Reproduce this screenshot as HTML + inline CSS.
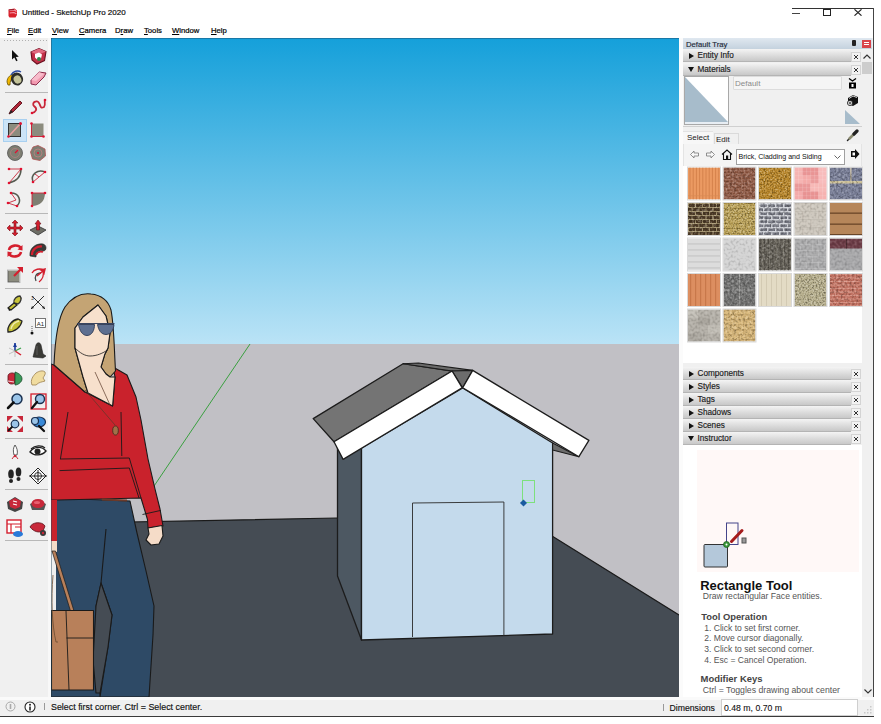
<!DOCTYPE html>
<html><head><meta charset="utf-8">
<style>
*{margin:0;padding:0;box-sizing:border-box}
html,body{width:881px;height:724px;overflow:hidden;background:#fff;font-family:"Liberation Sans",sans-serif;color:#000}
.a{position:absolute}
.t{position:absolute;white-space:nowrap;line-height:1}
#title{left:22px;top:9.4px;font-size:8px;color:#111;-webkit-text-stroke:0.2px #111}
.menu{top:27px;font-size:7.7px;color:#000;-webkit-text-stroke:0.2px #000}
.menu u{text-decoration:underline}
#toolbar{left:0;top:38px;width:50px;height:659px;background:#f0f0f0}
#vp{left:51px;top:38px;width:628px;height:659px;overflow:hidden}
#tray{left:679px;top:38px;width:194px;height:659px;background:#f0f0f0}
.hdr{position:absolute;left:4px;width:168px;height:13px;background:linear-gradient(#f4f4f4,#d9d9d9 60%,#c8c8c8);border-bottom:1px solid #b4b4b4}
.hdr span{position:absolute;left:14.5px;top:2.5px;font-size:8.2px;color:#1a1a1a;line-height:1;-webkit-text-stroke:0.15px #1a1a1a}
.hdr i{position:absolute;left:6px;top:3.5px;width:0;height:0;border-top:3.5px solid transparent;border-bottom:3.5px solid transparent;border-left:5px solid #111}
.hdr i.d{left:5px;top:4px;border-left:3.5px solid transparent;border-right:3.5px solid transparent;border-top:5px solid #111;border-bottom:0}
.cls{position:absolute;left:172px;width:10px;height:10px;border:1px solid #d4d4d4;background:#f2f2f2}.cls:after{content:"";position:absolute;left:2px;top:2px;width:4px;height:4px;background:linear-gradient(45deg,transparent 42%,#333 42% 58%,transparent 58%),linear-gradient(-45deg,transparent 42%,#333 42% 58%,transparent 58%)}
#status{left:0;top:697px;width:874px;height:20px;background:#f0f0f0;border-bottom:1px solid #3a3a3a}
</style></head><body>
<!-- title bar -->
<svg class="a" style="left:8px;top:7.5px" width="10" height="10" viewBox="0 0 10 10"><path d="M0.5 1.5 L6.5 0.5 L9 2.5 L9 7 L7.5 9.5 L1.5 9.5 L0.5 8Z" fill="#d8202a"/><path d="M1.5 2.5 L6.5 2 L8.5 3.5 M1.8 5 L6 4.5 L8.5 6" stroke="#f49aa8" stroke-width="1.1" fill="none"/><path d="M0.8 2 L6 1.5" stroke="#7a1020" stroke-width="0.8"/></svg>
<div class="t" id="title">Untitled - SketchUp Pro 2020</div>
<div class="a" style="left:792px;top:8px;width:82px;height:1px;background:#333"></div>
<div class="a" style="left:873px;top:8px;width:1px;height:709px;background:#444"></div>
<div class="a" style="left:792px;top:12.5px;width:8px;height:1px;background:#444"></div>
<div class="a" style="left:823px;top:9px;width:7.5px;height:7px;border:1px solid #222"></div>
<svg class="a" style="left:854px;top:9px" width="8" height="7"><path d="M0.5 0.3L7.5 6.7M7.5 0.3L0.5 6.7" stroke="#222" stroke-width="1.1"/></svg>
<!-- menu -->
<div class="t menu" style="left:7px"><u>F</u>ile</div>
<div class="t menu" style="left:28px"><u>E</u>dit</div>
<div class="t menu" style="left:52px"><u>V</u>iew</div>
<div class="t menu" style="left:79px"><u>C</u>amera</div>
<div class="t menu" style="left:115px">D<u>r</u>aw</div>
<div class="t menu" style="left:144px"><u>T</u>ools</div>
<div class="t menu" style="left:172px"><u>W</u>indow</div>
<div class="t menu" style="left:211px"><u>H</u>elp</div>

<div class="a" id="toolbar"></div>
<div class="a" style="left:48px;top:38px;width:3px;height:659px;background:#f8f8f8"></div>
<div class="a" style="left:4px;top:40px;width:44px;height:1px;background:repeating-linear-gradient(90deg,#b0b0b0 0 1px,transparent 1px 3px)"></div>
<div class="a" style="left:3px;top:119px;width:24px;height:23px;background:#cce4f7;border:1px solid #a8d0f0"></div>
<div class="a" style="left:5px;top:92px;width:43px;height:1px;background:#b8b8b8"></div>
<div class="a" style="left:5px;top:213px;width:43px;height:1px;background:#b8b8b8"></div>
<div class="a" style="left:5px;top:288px;width:43px;height:1px;background:#b8b8b8"></div>
<div class="a" style="left:5px;top:364px;width:43px;height:1px;background:#b8b8b8"></div>
<div class="a" style="left:5px;top:438px;width:43px;height:1px;background:#b8b8b8"></div>
<div class="a" style="left:5px;top:489px;width:43px;height:1px;background:#b8b8b8"></div>
<div class="a" style="left:5px;top:540px;width:43px;height:1px;background:#b8b8b8"></div>
<svg class="a" style="left:5px;top:46px" width="20" height="20" viewBox="0 0 20 20"><path d="M7 4 L7 13.5 L9.3 11.6 L11.2 15.2 L12.6 14.5 L10.8 10.9 L13.8 10.7 Z" fill="#111"/></svg>
<svg class="a" style="left:28px;top:46px" width="20" height="20" viewBox="0 0 20 20"><path d="M3 6 L11 2.5 L18 5.5 L16.5 14.5 L9 18 L4 14 Z" fill="#c23048" stroke="#6a1020" stroke-width="1.1"/><path d="M3 6 L11 2.5 L18 5.5 L10 9Z" fill="#e06a80"/><path d="M7 8 L11 6.5 L14 8.5 L13 12.5 L9 13.5 L7 11.5Z" fill="#fff"/><circle cx="11" cy="13" r="2" fill="#2f8a4a"/></svg>
<svg class="a" style="left:5px;top:68px" width="20" height="20" viewBox="0 0 20 20"><path d="M2 14 C2 9 6 6 10 6 L8 10 C6 11 5 13 5 17 L3 17Z" fill="#f2b800" stroke="#6a5200" stroke-width="0.8"/><ellipse cx="12" cy="11" rx="6" ry="6.5" transform="rotate(-25 12 11)" fill="#2e2e2a"/><ellipse cx="12.5" cy="11.5" rx="3.8" ry="4.2" transform="rotate(-25 12.5 11.5)" fill="#c4c49a"/><path d="M6 7 C8 3 13 2 16 4" stroke="#2a4aa0" stroke-width="1.3" fill="none"/></svg>
<svg class="a" style="left:28px;top:68px" width="20" height="20" viewBox="0 0 20 20"><path d="M3 12 L11 4 L18 5 L16 9 L8 17 L3 16Z" fill="#f29ab0" stroke="#8a2a4a" stroke-width="1"/><path d="M3 12 L11 4 L16 6 L8 13Z" fill="#f7bccb"/></svg>
<svg class="a" style="left:5px;top:97px" width="20" height="20" viewBox="0 0 20 20"><path d="M4 17 L6 13 L15 4 L17 6 L8 15 Z" fill="#b0283a" stroke="#5a1018" stroke-width="0.9"/><path d="M4 17 L6 13 L8 15Z" fill="#222"/></svg>
<svg class="a" style="left:28px;top:97px" width="20" height="20" viewBox="0 0 20 20"><path d="M4 16 C8 15 10 12 6 9 C3 6 9 2 11 6 C13 9 12 12 16 10 C18 8 16 4 17 3" stroke="#c8283a" stroke-width="1.8" fill="none"/><circle cx="4" cy="16" r="1.3" fill="#e01030"/><circle cx="17" cy="3" r="1.3" fill="#e01030"/></svg>
<svg class="a" style="left:5px;top:120px" width="20" height="20" viewBox="0 0 20 20"><rect x="3.5" y="3.5" width="12" height="13" fill="#8c8c7e" stroke="#333" stroke-width="1"/><path d="M4 16 L15 4" stroke="#e8a0a0" stroke-width="1.5"/><circle cx="15.5" cy="3.5" r="1.5" fill="#e01030"/><circle cx="3.5" cy="16.5" r="1.3" fill="#e01030"/></svg>
<svg class="a" style="left:28px;top:120px" width="20" height="20" viewBox="0 0 20 20"><rect x="3.5" y="3.5" width="12" height="13" fill="#8c8c7e"/><path d="M3.5 3.5 V16.5 H15.5" stroke="#c8283a" stroke-width="1" fill="none"/><circle cx="3.5" cy="3.5" r="1.3" fill="#e01030"/><circle cx="3.5" cy="16.5" r="1.3" fill="#e01030"/><circle cx="15.5" cy="16.5" r="1.3" fill="#e01030"/></svg>
<svg class="a" style="left:5px;top:143px" width="20" height="20" viewBox="0 0 20 20"><circle cx="10" cy="10" r="7.5" fill="#7e7e72" stroke="#555" stroke-width="0.8"/><circle cx="10" cy="10" r="4.5" fill="none" stroke="#b08080" stroke-width="0.8"/><path d="M10 10 L13 7" stroke="#e01030" stroke-width="1.2"/></svg>
<svg class="a" style="left:28px;top:143px" width="20" height="20" viewBox="0 0 20 20"><path d="M10 2.5 L17 6 L17.5 13 L12 17.5 L4.5 16 L2.5 9 L5 4Z" fill="#7e7e72" stroke="#b05050" stroke-width="0.8"/><circle cx="10" cy="10" r="4" fill="none" stroke="#c08080" stroke-width="0.8"/><circle cx="10" cy="10" r="1" fill="#e01030"/></svg>
<svg class="a" style="left:5px;top:166px" width="20" height="20" viewBox="0 0 20 20"><path d="M4 17 C12 15 16 10 16 3" stroke="#555a50" stroke-width="1.5" fill="none"/><path d="M4 17 L16 3 M4 3 L16 3" stroke="#c8283a" stroke-width="0.9"/><circle cx="4" cy="3" r="1.3" fill="#e01030"/><circle cx="16" cy="3" r="1.3" fill="#e01030"/><circle cx="4" cy="17" r="1.3" fill="#e01030"/></svg>
<svg class="a" style="left:28px;top:166px" width="20" height="20" viewBox="0 0 20 20"><path d="M5 16 C2 8 10 3 17 6" stroke="#555a50" stroke-width="1.5" fill="none"/><path d="M5 16 L17 6 M7 8 L11 11" stroke="#c8283a" stroke-width="0.9"/><circle cx="5" cy="16" r="1.3" fill="#e01030"/><circle cx="17" cy="6" r="1.3" fill="#e01030"/></svg>
<svg class="a" style="left:5px;top:189px" width="20" height="20" viewBox="0 0 20 20"><path d="M6 4 C14 4 17 12 12 17" stroke="#555a50" stroke-width="1.5" fill="none"/><path d="M6 4 L11 11 L3 14 L12 17" stroke="#c8283a" stroke-width="0.9" fill="none"/><circle cx="6" cy="4" r="1.3" fill="#e01030"/><circle cx="3" cy="14" r="1.3" fill="#e01030"/><circle cx="12" cy="17" r="1.3" fill="#e01030"/></svg>
<svg class="a" style="left:28px;top:189px" width="20" height="20" viewBox="0 0 20 20"><path d="M4 17 L4 4 L17 4 C17 12 12 17 4 17Z" fill="#7e7e72"/><path d="M4 4 L17 4 M4 4 L4 17" stroke="#c8283a" stroke-width="0.9"/><circle cx="4" cy="4" r="1.3" fill="#e01030"/><circle cx="17" cy="4" r="1.3" fill="#e01030"/><circle cx="4" cy="17" r="1.3" fill="#e01030"/></svg>
<svg class="a" style="left:5px;top:218px" width="20" height="20" viewBox="0 0 20 20"><path d="M10 2 L13 5 L11 5 L11 9 L15 9 L15 7 L18 10 L15 13 L15 11 L11 11 L11 15 L13 15 L10 18 L7 15 L9 15 L9 11 L5 11 L5 13 L2 10 L5 7 L5 9 L9 9 L9 5 L7 5Z" fill="#d41f2e" stroke="#7a1018" stroke-width="0.6"/></svg>
<svg class="a" style="left:28px;top:218px" width="20" height="20" viewBox="0 0 20 20"><path d="M2 12 L10 8 L18 12 L10 17Z" fill="#6e6e66" stroke="#333" stroke-width="0.8"/><path d="M10 2 L13 6 L11.5 6 L11.5 12 L8.5 12 L8.5 6 L7 6Z" fill="#d41f2e" stroke="#6a1018" stroke-width="0.6"/></svg>
<svg class="a" style="left:5px;top:241px" width="20" height="20" viewBox="0 0 20 20"><path d="M4 9 C5 4 13 3 16 7" stroke="#d41f2e" stroke-width="2.6" fill="none"/><path d="M16 11 C15 16 7 17 4 13" stroke="#d41f2e" stroke-width="2.6" fill="none"/><path d="M17.5 4 L17.5 9.5 L12.5 8.5Z" fill="#d41f2e"/><path d="M2.5 16 L2.5 10.5 L7.5 11.5Z" fill="#d41f2e"/></svg>
<svg class="a" style="left:28px;top:241px" width="20" height="20" viewBox="0 0 20 20"><path d="M2 15 C1 7 8 2 15 3 C19 4 19 10 15 10 C11 9 8 12 8 16 Z" fill="#3a3a38" stroke="#222" stroke-width="0.6"/><path d="M4 14 C4 8 9 5 14 5.5" stroke="#d41f2e" stroke-width="2.2" fill="none"/><path d="M8 14 C9 11 12 10 15 11" stroke="#d41f2e" stroke-width="1.8" fill="none"/></svg>
<svg class="a" style="left:5px;top:265px" width="20" height="20" viewBox="0 0 20 20"><rect x="3" y="5" width="12" height="12" fill="#8c8c7e" stroke="#555" stroke-width="0.8"/><path d="M3 5 H15 V17" stroke="#fff" stroke-width="1" fill="none"/><path d="M9 11 L16 4" stroke="#d41f2e" stroke-width="2.2"/><path d="M12 2 L18 2 L18 8Z" fill="#d41f2e"/></svg>
<svg class="a" style="left:28px;top:265px" width="20" height="20" viewBox="0 0 20 20"><path d="M4 8 C6 4 12 3 16 5" stroke="#d41f2e" stroke-width="1.3" fill="none"/><path d="M8 16 C6 12 8 8 13 8" stroke="#444" stroke-width="1.3" fill="none"/><path d="M11 17 C15 14 16 10 15 6" stroke="#d41f2e" stroke-width="1.3" fill="none"/><path d="M9 11 L15 6 L13 5 L17 4 L16 8 L15 6" fill="#d41f2e" stroke="#d41f2e" stroke-width="1.5"/></svg>
<svg class="a" style="left:5px;top:293px" width="20" height="20" viewBox="0 0 20 20"><path d="M9 10 C8 6 12 3 15 3 C17 5 16 9 13 11Z" fill="#c8c43a" stroke="#333" stroke-width="1.3"/><path d="M3 15 L9 10 L12 12 L6 17Z" fill="#c8c43a" stroke="#222" stroke-width="1.2"/><path d="M3 15 L6 17 L4 18Z" fill="#111"/></svg>
<svg class="a" style="left:28px;top:293px" width="20" height="20" viewBox="0 0 20 20"><path d="M4 3 L17 16 M16 3 L3 16" stroke="#333" stroke-width="1"/><path d="M3 16 L6 15 L4 13Z M17 16 L14 15 L16 13Z" fill="#222"/><text x="3" y="7" font-size="5" fill="#333" font-family="Liberation Sans">3</text></svg>
<svg class="a" style="left:5px;top:316px" width="20" height="20" viewBox="0 0 20 20"><path d="M3 16 C2 10 7 4 13 3 L17 5 C16 11 10 16 3 16Z" fill="#c4c03a" stroke="#222" stroke-width="1.3"/><path d="M6 13 C7 9 10 6 14 5" stroke="#f0ecb0" stroke-width="1.4" fill="none"/></svg>
<svg class="a" style="left:28px;top:316px" width="20" height="20" viewBox="0 0 20 20"><rect x="7.5" y="2.5" width="10" height="9" fill="#fff" stroke="#555" stroke-width="0.8"/><text x="8.7" y="9.5" font-size="6" fill="#222" font-family="Liberation Sans">A1</text><path d="M4 10 V16" stroke="#333" stroke-width="0.8" stroke-dasharray="1 1"/><circle cx="4" cy="17" r="1.5" fill="#111"/></svg>
<svg class="a" style="left:5px;top:340px" width="20" height="20" viewBox="0 0 20 20"><path d="M10 11 L10 3" stroke="#1a3a9a" stroke-width="1.6"/><path d="M10 3 L8 7 L12 7Z" fill="#1a3a9a"/><path d="M10 11 L16 8" stroke="#3aa04a" stroke-width="1.3"/><path d="M10 11 L16 15" stroke="#d41f2e" stroke-width="1.5"/><path d="M10 11 L4 14 M10 11 L10 17 M10 11 L4 8" stroke="#aaa" stroke-width="0.7"/></svg>
<svg class="a" style="left:28px;top:340px" width="20" height="20" viewBox="0 0 20 20"><path d="M5 17 L8 5 C9 2 12 2 13 5 L15 14 L18 16 L15 18Z" fill="#3a3a36" stroke="#222" stroke-width="0.6"/><path d="M9 6 L9 15" stroke="#666" stroke-width="0.8"/></svg>
<svg class="a" style="left:5px;top:368px" width="20" height="20" viewBox="0 0 20 20"><path d="M3 8 C3 5 8 4 10 6 L10 15 C7 17 3 16 3 13Z" fill="#c8283a" stroke="#5a1018" stroke-width="0.8"/><path d="M10 4 L10 17 C13 17 17 14 17 11 C17 7 13 5 10 4Z" fill="#3a9a5a" stroke="#1a4a2a" stroke-width="0.8"/><path d="M3 13 L9 14" stroke="#fff" stroke-width="0.8"/></svg>
<svg class="a" style="left:28px;top:368px" width="20" height="20" viewBox="0 0 20 20"><path d="M4 17 C2 12 5 8 8 5 C11 3 15 2 17 4 C18 6 16 8 15 10 L17 13 C14 14 11 14 8 17Z" fill="#f0dca0" stroke="#9a8050" stroke-width="0.8"/></svg>
<svg class="a" style="left:5px;top:391px" width="20" height="20" viewBox="0 0 20 20"><circle cx="12" cy="8" r="5" fill="#9ac4e8" stroke="#1a3050" stroke-width="1.5"/><path d="M8.5 11.5 L3 17" stroke="#111" stroke-width="2.5" stroke-linecap="round"/></svg>
<svg class="a" style="left:28px;top:391px" width="20" height="20" viewBox="0 0 20 20"><rect x="3" y="3" width="15" height="15" fill="none" stroke="#d41f2e" stroke-width="1.3"/><circle cx="12" cy="8" r="4.5" fill="#9ac4e8" stroke="#1a3050" stroke-width="1.4"/><path d="M9 11 L4 17" stroke="#111" stroke-width="2.3" stroke-linecap="round"/></svg>
<svg class="a" style="left:5px;top:414px" width="20" height="20" viewBox="0 0 20 20"><path d="M2 2 L8 2 L2 8Z M18 2 L12 2 L18 8Z M2 18 L8 18 L2 12Z M18 18 L12 18 L18 12Z" fill="#c8283a"/><circle cx="10" cy="10" r="3.8" fill="#9ac4e8" stroke="#1a3050" stroke-width="1.2"/><path d="M7.5 12.5 L3 17" stroke="#111" stroke-width="1.8"/></svg>
<svg class="a" style="left:28px;top:414px" width="20" height="20" viewBox="0 0 20 20"><ellipse cx="11" cy="8" rx="6.5" ry="5" fill="#3a8ad8" stroke="#1a3050" stroke-width="1.2"/><circle cx="7" cy="7" r="3.5" fill="#9ac4e8" stroke="#1a3050" stroke-width="1.2"/><path d="M11 12 L16 17" stroke="#111" stroke-width="2.3" stroke-linecap="round"/></svg>
<svg class="a" style="left:5px;top:442px" width="20" height="20" viewBox="0 0 20 20"><path d="M10 3 C12 6 13 9 12 13 L9 13 C8 9 8 6 10 3Z" fill="#fff" stroke="#333" stroke-width="0.8"/><path d="M7 17 L10 13 L13 17" stroke="#c8283a" stroke-width="1" fill="none"/><circle cx="10" cy="14" r="1.2" fill="#c8283a"/></svg>
<svg class="a" style="left:28px;top:442px" width="20" height="20" viewBox="0 0 20 20"><path d="M2 10 C6 4 14 4 18 9 C14 14 6 14 2 10Z" fill="#fff" stroke="#222" stroke-width="1.4"/><circle cx="9.5" cy="9.5" r="3" fill="#222"/><path d="M3 7 C7 3 14 3 17 6" stroke="#222" stroke-width="1.2" fill="none"/></svg>
<svg class="a" style="left:5px;top:466px" width="20" height="20" viewBox="0 0 20 20"><ellipse cx="6" cy="8" rx="2.8" ry="4.5" fill="#222"/><ellipse cx="6" cy="15" rx="2" ry="2" fill="#222"/><ellipse cx="13.5" cy="6" rx="2.8" ry="4.5" fill="#222"/><ellipse cx="13.5" cy="13" rx="2" ry="2" fill="#222"/></svg>
<svg class="a" style="left:28px;top:466px" width="20" height="20" viewBox="0 0 20 20"><path d="M10 2 L18 10 L10 18 L2 10Z" fill="#fff" stroke="#222" stroke-width="1"/><path d="M1 10 H19 M10 4 V16" stroke="#222" stroke-width="1"/><circle cx="10" cy="10" r="3.5" fill="none" stroke="#222" stroke-width="0.9"/></svg>
<svg class="a" style="left:5px;top:494px" width="20" height="20" viewBox="0 0 20 20"><path d="M2 8 L10 3 L18 8 L17 15 L10 18 L3 15Z" fill="#444" /><path d="M4 7 L10 4 L16 7 L15 13 L10 15 L5 13Z" fill="#c8283a"/><path d="M8 7 L12 8 M8 10 L12 11" stroke="#fff" stroke-width="1.1"/></svg>
<svg class="a" style="left:28px;top:494px" width="20" height="20" viewBox="0 0 20 20"><path d="M2 10 L10 6 L18 10 L16 16 L4 16Z" fill="#555" /><ellipse cx="10" cy="9.5" rx="6.5" ry="4.5" fill="#c8283a"/><ellipse cx="9" cy="8.5" rx="3" ry="1.5" fill="#e86070"/></svg>
<svg class="a" style="left:5px;top:518px" width="20" height="20" viewBox="0 0 20 20"><rect x="2" y="2" width="14" height="13" fill="#fff" stroke="#d41f2e" stroke-width="1.4"/><path d="M2 6 H16 M6 6 V15 M10 9 H16" stroke="#d41f2e" stroke-width="1.2"/><ellipse cx="13" cy="16" rx="5" ry="3" fill="#2a7ad8"/></svg>
<svg class="a" style="left:28px;top:518px" width="20" height="20" viewBox="0 0 20 20"><path d="M2 9 C4 4 14 3 17 8 L15 13 C11 15 6 14 2 9Z" fill="#c8283a" stroke="#5a1018" stroke-width="0.8"/><circle cx="15" cy="15" r="3" fill="#3a3a3a"/><circle cx="15" cy="15" r="1.2" fill="#c8283a"/></svg>
<div class="a" id="vp">
<svg width="628" height="659" viewBox="51 38 628 659" style="position:absolute;left:0;top:0">
<defs><linearGradient id="sky" x1="0" y1="0" x2="0" y2="1"><stop offset="0" stop-color="#15a0da"/><stop offset="1" stop-color="#bae3f6"/></linearGradient></defs>
<rect x="51" y="38" width="628" height="306" fill="url(#sky)"/>
<rect x="51" y="344" width="628" height="353" fill="#c1c0c5"/>
<polygon points="51,523.5 337,518 552,536 679,615 679,697 51,697" fill="#454c54"/>
<path d="M51,523.5 L337,518 M552,536 L679,615" stroke="#1a1a1a" stroke-width="1.2" fill="none"/>
<line x1="250" y1="344" x2="150" y2="492" stroke="#3aa040" stroke-width="1"/>
<!-- figure -->
<g stroke="#1a1a1a" stroke-width="1.1" stroke-linejoin="round">
<path d="M51,498 L51,697 L100,697 L99,646 L96,606 L101,583 L112,615 L108,647 L100,697 L149,697 L153,635 L154,606 L146,571 L137,533 L130,501 L51,498Z" fill="#2e4a66"/>
<path d="M96,606 L101,583 L112,615 L108,647 L100,693 L96,693 L93,660 Z" fill="#454c54"/>
<path d="M106,529 L101,583" fill="none"/>
<path d="M51,364 L54,365 L85,392 L112.6,406 L115,377 L113,367 L127,375 L136,397 L141,420 L148,459 L155,489 L160,509 L163,526 L148,528 L147.5,519.5 L141,498 L100,499 L58,500 L51,500 Z" fill="#c9222c"/>
<path d="M60,459 L129.3,458 M59.6,470.6 L129.3,468 M68,412 L60.4,459 M121,412 L121.8,456 M129.3,458 L141,498 M129.3,468 L139,498 M142.5,514.5 L160.8,510.4" fill="none" stroke-width="0.9"/>
<path d="M102,499.5 L127,500.5" stroke="#6b3a2a" stroke-width="2.2"/>
<path d="M54,365 C55,340 58,318 65,307 C73,296 83,293 91,294 C101,295 108,300 111,310 C114,325 114,345 115.5,371 L110,377 L106,374 L101,367 L104.7,354.6 L108,348 L110,333 L106,316 L98,305 L83,317 L75,328 L75,348 L83,377 L88,393 L85,392 Z" fill="#c4a474"/>
<path d="M98,305 L106,316 L110,333 L108,348 L104.7,354.6 L101,367 L106,374 L110,377 L115,377 L112.6,406 L88,393 L83,377 L75,348 L75,328 L83,317 Z" fill="#f7e0cc"/>
<path d="M75,348 C80,353 85,356 90,356 C97,356 103,353 107.6,350" fill="none" stroke-width="0.8"/>
<path d="M77,323.5 L114.5,323.5" stroke="#3a4560" stroke-width="1.2"/><path d="M78.5,324.5 L94.5,324.5 C94.5,330 92,335.5 87,335.5 C82,335.5 79.5,330 78.5,324.5Z" fill="#5e6f90" stroke="#2e3a55" stroke-width="0.9"/><path d="M97.5,324.5 L114,324.5 C113.5,330 111,334.5 106,334.5 C101,334.5 98.5,330 97.5,324.5Z" fill="#5e6f90" stroke="#2e3a55" stroke-width="0.9"/>
<path d="M85,390 L115,425 M95,372 L110,405" fill="none" stroke="#5a3a2a" stroke-width="0.7"/>
<ellipse cx="115.5" cy="430.5" rx="2.8" ry="4.5" fill="#a07048" stroke="#3a2a1a" stroke-width="0.8"/>
<path d="M148,528 L162,525.5 L163,536 L159,544 L151,545 L146,540 L149,534 Z" fill="#f5dcc8"/>
<path d="M51,500 L57,500 L57,545 L51,545Z" fill="#c9222c" stroke="none"/>
<path d="M51,545 L56,545 L56,610 L51,610Z" fill="#eeeeee" stroke="none"/>
<path d="M51,541 L57,541 L57,552 L51,552Z" fill="#f5dcc8" stroke="none"/>
<path d="M52,551 L55.5,551 L74,611 L70.5,611Z" fill="#b8805a" stroke-width="0.7"/>
<path d="M51.5,610.5 L93.5,610.5 L93.5,690 L51.5,690Z" fill="#b8805a"/>
<path d="M66,611 L69,690 M66.5,638 L93.5,638" fill="none" stroke-width="0.9"/>
<path d="M53,575 C51,600 52,625 56,642 L58,642" fill="none" stroke="#6a4a30" stroke-width="0.8"/>
</g>
<!-- house -->
<g stroke="#1c1c1c" stroke-linejoin="round">
<polygon points="337.5,446 361.5,446 361.5,640 337.5,576" fill="#4d5862" stroke-width="1.3"/>
<polygon points="361.5,448 462.7,388 552.6,443 552.6,634 361.5,640" fill="#c4daec" stroke-width="1.3"/>
<polyline points="412.5,637 412.5,503 503.9,502 503.9,636" fill="none" stroke="#2a2a2a" stroke-width="0.9"/>
<polygon points="313.2,418.6 403.1,363.7 452.1,371 334,441.8" fill="#747474" stroke-width="1.3"/>
<polygon points="403.1,363.7 418.5,363 472.7,370.4 452.1,371" fill="#6a6a6a" stroke-width="1.1"/>
<polygon points="452.1,371 472.7,370.4 462.7,387.7" fill="#6c6c6c" stroke-width="1.1"/>
<polygon points="552.6,443 578.9,456.7 552.6,450" fill="#6c6c6c" stroke-width="1.1"/>
<polygon points="334,441.8 452.1,371 462.1,387.7 343.1,459.4" fill="#fff" stroke-width="1.3"/>
<polygon points="472.7,370.4 588.9,440.4 578.9,456.7 462.7,387.7" fill="#fff" stroke-width="1.3"/>
</g>
<rect x="522.5" y="480.5" width="12" height="22" fill="none" stroke="#7de07d" stroke-width="1"/>
<rect x="521" y="500.5" width="5" height="5" fill="#1a5aa0" transform="rotate(45 523.5 503)"/>
</svg>
<div class="a" style="left:0;top:0;width:1px;height:659px;background:rgba(40,70,90,.45)"></div>
<div class="a" style="left:0;top:0;width:628px;height:1px;background:rgba(30,60,90,.4)"></div>
</div>
<div class="a" id="tray">
<div class="a" style="left:0;top:0;width:4px;height:659px;background:#fbfbfb"></div>
<div class="a" style="left:4px;top:0;width:189px;height:10.5px;background:linear-gradient(#e0e8f0,#c4d2de)"></div>
<div class="t" style="left:7px;top:2.5px;font-size:7.7px;color:#1e2a38;-webkit-text-stroke:0.15px #1e2a38">Default Tray</div>
<div class="a" style="left:172.5px;top:2px;width:4px;height:6px;background:#222;border-radius:1px"></div>
<div class="a" style="left:183px;top:2px;width:9px;height:8px;background:#d9434b"></div>
<div class="a" style="left:185px;top:4px;width:5px;height:1px;background:#fff"></div><div class="a" style="left:185px;top:6px;width:5px;height:1px;background:#fff"></div>
<div class="hdr" style="top:11px"><i></i><span>Entity Info</span></div><div class="cls" style="top:14px"></div>
<div class="hdr" style="top:25px"><i class="d"></i><span>Materials</span></div><div class="cls" style="top:27px"></div>
<div class="a" style="left:183px;top:24px;width:10px;height:12px;background:#cdcdcd"></div>
<svg class="a" style="left:184px;top:16px" width="8" height="5"><path d="M0.5 4.5 L4 1 L7.5 4.5" stroke="#333" stroke-width="1.2" fill="none"/></svg>
<!-- preview -->
<div class="a" style="left:5px;top:38px;width:45px;height:49px;background:#fff;border:1px solid #a8a8a8"></div>
<svg class="a" style="left:6px;top:39px" width="43" height="45"><polygon points="0,0 43,45 0,45" fill="#a7bccb"/></svg>
<div class="a" style="left:6px;top:84px;width:43px;height:2px;background:#e8eef4"></div>
<div class="a" style="left:54px;top:38px;width:109px;height:14px;background:#f5f5f5;border:1px solid #dcdcdc;border-radius:1px"></div>
<div class="t" style="left:56px;top:41.5px;font-size:8px;color:#8a8a8a">Default</div>
<svg class="a" style="left:169px;top:40px" width="9" height="11"><path d="M1 0.5 L4.5 3 L8 0.5" stroke="#000" stroke-width="1.3" fill="none"/><rect x="1" y="4.5" width="7" height="6" fill="#000"/><rect x="3.5" y="6" width="2" height="3" fill="#fff"/></svg>
<svg class="a" style="left:167px;top:56px" width="13" height="13"><path d="M2 4 L7 1 L12 3 L12 9 L7 12 L2 10Z" fill="#111"/><path d="M3 4.5 L7 2 L11 3.5" stroke="#fff" stroke-width="0.8" fill="none"/><circle cx="4" cy="9" r="2.6" fill="#fff" stroke="#111" stroke-width="0.8"/><path d="M4 7.5V10.5M2.5 9H5.5" stroke="#111" stroke-width="0.8"/></svg>
<svg class="a" style="left:166px;top:72px" width="15" height="14"><polygon points="0,0 15,14 0,14" fill="#a7bccb"/></svg>
<div class="a" style="left:4px;top:88px;width:179px;height:1px;background:#d0d0d0"></div>
<!-- tabs -->
<div class="a" style="left:4px;top:92.5px;width:30px;height:13px;background:#f7f7f7;border-top:1px solid #e2e2e2"></div>
<div class="t" style="left:8px;top:96px;font-size:8px;color:#222">Select</div>
<div class="a" style="left:34.5px;top:94.5px;width:25px;height:12px;border:1px solid #dadada;border-bottom:0;background:#f0f0f0"></div>
<div class="t" style="left:37px;top:97.5px;font-size:8px;color:#222">Edit</div>
<svg class="a" style="left:167px;top:91px" width="13" height="13"><path d="M1.5 11.5 L4 9" stroke="#222" stroke-width="1.5" stroke-linecap="round"/><path d="M3.5 9.5 L8 5" stroke="#8a8a70" stroke-width="2.6" stroke-linecap="round"/><path d="M8 5 L11 2" stroke="#222" stroke-width="3.2" stroke-linecap="round"/></svg>
<div class="a" style="left:4px;top:106.4px;width:179px;height:22px;background:#f4f4f4;border-left:1px solid #e4e4e4;border-right:1px solid #e4e4e4"></div>
<svg class="a" style="left:11px;top:112px" width="9" height="9"><path d="M0.5 4.5 L4 1 L4 3 L8.5 3 L8.5 6 L4 6 L4 8 Z" fill="#f8f8f8" stroke="#777" stroke-width="0.8"/></svg>
<svg class="a" style="left:27px;top:112px" width="9" height="9"><path d="M8.5 4.5 L5 1 L5 3 L0.5 3 L0.5 6 L5 6 L5 8 Z" fill="#f8f8f8" stroke="#777" stroke-width="0.8"/></svg>
<svg class="a" style="left:42px;top:111px" width="12" height="11"><path d="M1 5.5 L6 1 L11 5.5 M2.5 4.5 V10.5 H9.5 V4.5" stroke="#111" stroke-width="1.1" fill="none"/><rect x="5" y="6.5" width="2.2" height="4" fill="#111"/></svg>
<div class="a" style="left:57px;top:111px;width:109px;height:16px;background:#fff;border:1px solid #a0a0a0"></div>
<div class="t" style="left:59.5px;top:115.5px;font-size:7.1px;color:#111">Brick, Cladding and Siding</div>
<svg class="a" style="left:155px;top:117px" width="7" height="5"><path d="M0.5 0.5 L3.5 3.5 L6.5 0.5" stroke="#555" stroke-width="0.9" fill="none"/></svg>
<svg class="a" style="left:171px;top:111px" width="10" height="10"><path d="M1 2 H5 V0 L9.5 5 L5 10 V8 H1Z" fill="#111"/><rect x="2.5" y="3.5" width="2.5" height="3" fill="#fff"/></svg>
<!-- swatches -->
<div class="a" style="left:4px;top:127.5px;width:179px;height:197px;background:#fff"></div>
<!-- swatches-svg --><svg class="a" style="left:0;top:0" width="194" height="659"><defs>
<filter id="nz" x="0" y="0" width="32" height="32" filterUnits="userSpaceOnUse" color-interpolation-filters="sRGB"><feTurbulence type="fractalNoise" baseFrequency="0.45" numOctaves="2" seed="4" result="t"/><feColorMatrix in="t" type="matrix" values="0.45 0 0 0 0.27  0.45 0 0 0 0.27  0.45 0 0 0 0.27  0 0 0 0 1" result="g"/><feGaussianBlur in="g" stdDeviation="0.35" result="g2"/><feBlend in="SourceGraphic" in2="g2" mode="overlay" result="b"/><feGaussianBlur in="b" stdDeviation="0.3" result="b2"/><feComposite in="b2" in2="SourceGraphic" operator="in"/></filter>
<filter id="nzs" x="0" y="0" width="32" height="32" filterUnits="userSpaceOnUse" color-interpolation-filters="sRGB"><feTurbulence type="fractalNoise" baseFrequency="0.6" numOctaves="2" seed="9" result="t"/><feColorMatrix in="t" type="matrix" values="0.6 0 0 0 0.2  0.6 0 0 0 0.2  0.6 0 0 0 0.2  0 0 0 0 1" result="g"/><feGaussianBlur in="g" stdDeviation="0.4" result="g2"/><feBlend in="SourceGraphic" in2="g2" mode="overlay" result="b"/><feComposite in="b" in2="SourceGraphic" operator="in"/></filter>
<filter id="nzl" x="0" y="0" width="32" height="32" filterUnits="userSpaceOnUse" color-interpolation-filters="sRGB"><feTurbulence type="fractalNoise" baseFrequency="0.4" numOctaves="1" seed="2" result="t"/><feColorMatrix in="t" type="matrix" values="0.25 0 0 0 0.375  0.25 0 0 0 0.375  0.25 0 0 0 0.375  0 0 0 0 1" result="g"/><feGaussianBlur in="g" stdDeviation="0.5" result="g2"/><feBlend in="SourceGraphic" in2="g2" mode="overlay" result="b"/><feComposite in="b" in2="SourceGraphic" operator="in"/></filter>
</defs><rect x="8.5" y="129.0" width="33" height="33" fill="none" stroke="#d9d9d9" stroke-width="1"/><rect x="44.0" y="129.0" width="33" height="33" fill="none" stroke="#d9d9d9" stroke-width="1"/><rect x="79.5" y="129.0" width="33" height="33" fill="none" stroke="#d9d9d9" stroke-width="1"/><rect x="115.0" y="129.0" width="33" height="33" fill="none" stroke="#d9d9d9" stroke-width="1"/><rect x="150.5" y="129.0" width="33" height="33" fill="none" stroke="#d9d9d9" stroke-width="1"/><rect x="8.5" y="164.5" width="33" height="33" fill="none" stroke="#d9d9d9" stroke-width="1"/><rect x="44.0" y="164.5" width="33" height="33" fill="none" stroke="#d9d9d9" stroke-width="1"/><rect x="79.5" y="164.5" width="33" height="33" fill="none" stroke="#d9d9d9" stroke-width="1"/><rect x="115.0" y="164.5" width="33" height="33" fill="none" stroke="#d9d9d9" stroke-width="1"/><rect x="150.5" y="164.5" width="33" height="33" fill="none" stroke="#d9d9d9" stroke-width="1"/><rect x="8.5" y="200.0" width="33" height="33" fill="none" stroke="#d9d9d9" stroke-width="1"/><rect x="44.0" y="200.0" width="33" height="33" fill="none" stroke="#d9d9d9" stroke-width="1"/><rect x="79.5" y="200.0" width="33" height="33" fill="none" stroke="#d9d9d9" stroke-width="1"/><rect x="115.0" y="200.0" width="33" height="33" fill="none" stroke="#d9d9d9" stroke-width="1"/><rect x="150.5" y="200.0" width="33" height="33" fill="none" stroke="#d9d9d9" stroke-width="1"/><rect x="8.5" y="235.5" width="33" height="33" fill="none" stroke="#d9d9d9" stroke-width="1"/><rect x="44.0" y="235.5" width="33" height="33" fill="none" stroke="#d9d9d9" stroke-width="1"/><rect x="79.5" y="235.5" width="33" height="33" fill="none" stroke="#d9d9d9" stroke-width="1"/><rect x="115.0" y="235.5" width="33" height="33" fill="none" stroke="#d9d9d9" stroke-width="1"/><rect x="150.5" y="235.5" width="33" height="33" fill="none" stroke="#d9d9d9" stroke-width="1"/><rect x="8.5" y="271.0" width="33" height="33" fill="none" stroke="#d9d9d9" stroke-width="1"/><rect x="44.0" y="271.0" width="33" height="33" fill="none" stroke="#d9d9d9" stroke-width="1"/><g transform="translate(9.0,129.5)"><svg width="32" height="32" overflow="hidden"><g><rect x="0" y="0" width="32" height="32" fill="#eb9a62" /><rect x="1.5" y="0" width="1" height="32" fill="#d5824c" /><rect x="4.7" y="0" width="1" height="32" fill="#d5824c" /><rect x="7.9" y="0" width="1" height="32" fill="#d5824c" /><rect x="11.100000000000001" y="0" width="1" height="32" fill="#d5824c" /><rect x="14.3" y="0" width="1" height="32" fill="#d5824c" /><rect x="17.5" y="0" width="1" height="32" fill="#d5824c" /><rect x="20.700000000000003" y="0" width="1" height="32" fill="#d5824c" /><rect x="23.900000000000002" y="0" width="1" height="32" fill="#d5824c" /><rect x="27.1" y="0" width="1" height="32" fill="#d5824c" /><rect x="30.3" y="0" width="1" height="32" fill="#d5824c" /><rect x="33.5" y="0" width="1" height="32" fill="#d5824c" /><rect x="0" y="28" width="32" height="0.7" fill="#d88a55" /></g></svg></g><g transform="translate(44.5,129.5)"><svg width="32" height="32" overflow="hidden"><g filter="url(#nz)"><rect x="0" y="0" width="32" height="32" fill="#86503a" /><rect x="0" y="0" width="32" height="0.8" fill="#a87868" /><rect x="0" y="3" width="32" height="0.8" fill="#a87868" /><rect x="0" y="6" width="32" height="0.8" fill="#a87868" /><rect x="0" y="9" width="32" height="0.8" fill="#a87868" /><rect x="0" y="12" width="32" height="0.8" fill="#a87868" /><rect x="0" y="15" width="32" height="0.8" fill="#a87868" /><rect x="0" y="18" width="32" height="0.8" fill="#a87868" /><rect x="0" y="21" width="32" height="0.8" fill="#a87868" /><rect x="0" y="24" width="32" height="0.8" fill="#a87868" /><rect x="0" y="27" width="32" height="0.8" fill="#a87868" /><rect x="0" y="30" width="32" height="0.8" fill="#a87868" /><rect x="-6" y="0" width="0.8" height="3" fill="#a87868" /><rect x="0" y="0" width="0.8" height="3" fill="#a87868" /><rect x="6" y="0" width="0.8" height="3" fill="#a87868" /><rect x="12" y="0" width="0.8" height="3" fill="#a87868" /><rect x="18" y="0" width="0.8" height="3" fill="#a87868" /><rect x="24" y="0" width="0.8" height="3" fill="#a87868" /><rect x="30" y="0" width="0.8" height="3" fill="#a87868" /><rect x="36" y="0" width="0.8" height="3" fill="#a87868" /><rect x="-3.0" y="3" width="0.8" height="3" fill="#a87868" /><rect x="3.0" y="3" width="0.8" height="3" fill="#a87868" /><rect x="9.0" y="3" width="0.8" height="3" fill="#a87868" /><rect x="15.0" y="3" width="0.8" height="3" fill="#a87868" /><rect x="21.0" y="3" width="0.8" height="3" fill="#a87868" /><rect x="27.0" y="3" width="0.8" height="3" fill="#a87868" /><rect x="33.0" y="3" width="0.8" height="3" fill="#a87868" /><rect x="39.0" y="3" width="0.8" height="3" fill="#a87868" /><rect x="-6" y="6" width="0.8" height="3" fill="#a87868" /><rect x="0" y="6" width="0.8" height="3" fill="#a87868" /><rect x="6" y="6" width="0.8" height="3" fill="#a87868" /><rect x="12" y="6" width="0.8" height="3" fill="#a87868" /><rect x="18" y="6" width="0.8" height="3" fill="#a87868" /><rect x="24" y="6" width="0.8" height="3" fill="#a87868" /><rect x="30" y="6" width="0.8" height="3" fill="#a87868" /><rect x="36" y="6" width="0.8" height="3" fill="#a87868" /><rect x="-3.0" y="9" width="0.8" height="3" fill="#a87868" /><rect x="3.0" y="9" width="0.8" height="3" fill="#a87868" /><rect x="9.0" y="9" width="0.8" height="3" fill="#a87868" /><rect x="15.0" y="9" width="0.8" height="3" fill="#a87868" /><rect x="21.0" y="9" width="0.8" height="3" fill="#a87868" /><rect x="27.0" y="9" width="0.8" height="3" fill="#a87868" /><rect x="33.0" y="9" width="0.8" height="3" fill="#a87868" /><rect x="39.0" y="9" width="0.8" height="3" fill="#a87868" /><rect x="-6" y="12" width="0.8" height="3" fill="#a87868" /><rect x="0" y="12" width="0.8" height="3" fill="#a87868" /><rect x="6" y="12" width="0.8" height="3" fill="#a87868" /><rect x="12" y="12" width="0.8" height="3" fill="#a87868" /><rect x="18" y="12" width="0.8" height="3" fill="#a87868" /><rect x="24" y="12" width="0.8" height="3" fill="#a87868" /><rect x="30" y="12" width="0.8" height="3" fill="#a87868" /><rect x="36" y="12" width="0.8" height="3" fill="#a87868" /><rect x="-3.0" y="15" width="0.8" height="3" fill="#a87868" /><rect x="3.0" y="15" width="0.8" height="3" fill="#a87868" /><rect x="9.0" y="15" width="0.8" height="3" fill="#a87868" /><rect x="15.0" y="15" width="0.8" height="3" fill="#a87868" /><rect x="21.0" y="15" width="0.8" height="3" fill="#a87868" /><rect x="27.0" y="15" width="0.8" height="3" fill="#a87868" /><rect x="33.0" y="15" width="0.8" height="3" fill="#a87868" /><rect x="39.0" y="15" width="0.8" height="3" fill="#a87868" /><rect x="-6" y="18" width="0.8" height="3" fill="#a87868" /><rect x="0" y="18" width="0.8" height="3" fill="#a87868" /><rect x="6" y="18" width="0.8" height="3" fill="#a87868" /><rect x="12" y="18" width="0.8" height="3" fill="#a87868" /><rect x="18" y="18" width="0.8" height="3" fill="#a87868" /><rect x="24" y="18" width="0.8" height="3" fill="#a87868" /><rect x="30" y="18" width="0.8" height="3" fill="#a87868" /><rect x="36" y="18" width="0.8" height="3" fill="#a87868" /><rect x="-3.0" y="21" width="0.8" height="3" fill="#a87868" /><rect x="3.0" y="21" width="0.8" height="3" fill="#a87868" /><rect x="9.0" y="21" width="0.8" height="3" fill="#a87868" /><rect x="15.0" y="21" width="0.8" height="3" fill="#a87868" /><rect x="21.0" y="21" width="0.8" height="3" fill="#a87868" /><rect x="27.0" y="21" width="0.8" height="3" fill="#a87868" /><rect x="33.0" y="21" width="0.8" height="3" fill="#a87868" /><rect x="39.0" y="21" width="0.8" height="3" fill="#a87868" /><rect x="-6" y="24" width="0.8" height="3" fill="#a87868" /><rect x="0" y="24" width="0.8" height="3" fill="#a87868" /><rect x="6" y="24" width="0.8" height="3" fill="#a87868" /><rect x="12" y="24" width="0.8" height="3" fill="#a87868" /><rect x="18" y="24" width="0.8" height="3" fill="#a87868" /><rect x="24" y="24" width="0.8" height="3" fill="#a87868" /><rect x="30" y="24" width="0.8" height="3" fill="#a87868" /><rect x="36" y="24" width="0.8" height="3" fill="#a87868" /><rect x="-3.0" y="27" width="0.8" height="3" fill="#a87868" /><rect x="3.0" y="27" width="0.8" height="3" fill="#a87868" /><rect x="9.0" y="27" width="0.8" height="3" fill="#a87868" /><rect x="15.0" y="27" width="0.8" height="3" fill="#a87868" /><rect x="21.0" y="27" width="0.8" height="3" fill="#a87868" /><rect x="27.0" y="27" width="0.8" height="3" fill="#a87868" /><rect x="33.0" y="27" width="0.8" height="3" fill="#a87868" /><rect x="39.0" y="27" width="0.8" height="3" fill="#a87868" /><rect x="-6" y="30" width="0.8" height="3" fill="#a87868" /><rect x="0" y="30" width="0.8" height="3" fill="#a87868" /><rect x="6" y="30" width="0.8" height="3" fill="#a87868" /><rect x="12" y="30" width="0.8" height="3" fill="#a87868" /><rect x="18" y="30" width="0.8" height="3" fill="#a87868" /><rect x="24" y="30" width="0.8" height="3" fill="#a87868" /><rect x="30" y="30" width="0.8" height="3" fill="#a87868" /><rect x="36" y="30" width="0.8" height="3" fill="#a87868" /></g></svg></g><g transform="translate(80.0,129.5)"><svg width="32" height="32" overflow="hidden"><g filter="url(#nzs)"><rect x="0" y="0" width="32" height="32" fill="#b8862a" /></g></svg></g><g transform="translate(115.5,129.5)"><svg width="32" height="32" overflow="hidden"><g><rect x="0" y="0" width="32" height="32" fill="#f2a6a6"/><rect x="0" y="0" width="8" height="16" fill="#f6b4b2" /><rect x="8" y="0" width="16" height="8" fill="#e99494" /><rect x="24" y="0" width="8" height="16" fill="#f8bcbc" /><rect x="8" y="8" width="8" height="16" fill="#f4aaa8" /><rect x="16" y="8" width="8" height="8" fill="#eb9c9c" /><rect x="0" y="16" width="16" height="8" fill="#ea9898" /><rect x="16" y="16" width="16" height="8" fill="#f7b8b6" /><rect x="0" y="24" width="8" height="8" fill="#f4aaaa" /><rect x="8" y="24" width="16" height="8" fill="#e89292" /><rect x="24" y="24" width="8" height="8" fill="#f6b2b0" /><rect x="0" y="0" width="0.6" height="32" fill="rgba(255,255,255,.25)" /><rect x="4" y="0" width="0.6" height="32" fill="rgba(255,255,255,.25)" /><rect x="8" y="0" width="0.6" height="32" fill="rgba(255,255,255,.25)" /><rect x="12" y="0" width="0.6" height="32" fill="rgba(255,255,255,.25)" /><rect x="16" y="0" width="0.6" height="32" fill="rgba(255,255,255,.25)" /><rect x="20" y="0" width="0.6" height="32" fill="rgba(255,255,255,.25)" /><rect x="24" y="0" width="0.6" height="32" fill="rgba(255,255,255,.25)" /><rect x="28" y="0" width="0.6" height="32" fill="rgba(255,255,255,.25)" /><rect x="32" y="0" width="0.6" height="32" fill="rgba(255,255,255,.25)" /><rect x="0" y="0" width="32" height="0.6" fill="rgba(255,255,255,.2)" /><rect x="0" y="4" width="32" height="0.6" fill="rgba(255,255,255,.2)" /><rect x="0" y="8" width="32" height="0.6" fill="rgba(255,255,255,.2)" /><rect x="0" y="12" width="32" height="0.6" fill="rgba(255,255,255,.2)" /><rect x="0" y="16" width="32" height="0.6" fill="rgba(255,255,255,.2)" /><rect x="0" y="20" width="32" height="0.6" fill="rgba(255,255,255,.2)" /><rect x="0" y="24" width="32" height="0.6" fill="rgba(255,255,255,.2)" /><rect x="0" y="28" width="32" height="0.6" fill="rgba(255,255,255,.2)" /><rect x="0" y="32" width="32" height="0.6" fill="rgba(255,255,255,.2)" /></g></svg></g><g transform="translate(151.0,129.5)"><svg width="32" height="32" overflow="hidden"><g filter="url(#nz)"><rect x="0" y="0" width="32" height="32" fill="#7a7f98" /><rect x="0" y="13.5" width="32" height="2.5" fill="#cbbf98" /><rect x="20" y="0" width="1.6" height="13.5" fill="#b8b0a0" /></g></svg></g><g transform="translate(9.0,165.0)"><svg width="32" height="32" overflow="hidden"><g filter="url(#nz)"><rect x="0" y="0" width="32" height="32" fill="#4c3a26" /><rect x="0" y="0" width="32" height="1" fill="#a49470" /><rect x="0" y="4" width="32" height="1" fill="#a49470" /><rect x="0" y="8" width="32" height="1" fill="#a49470" /><rect x="0" y="12" width="32" height="1" fill="#a49470" /><rect x="0" y="16" width="32" height="1" fill="#a49470" /><rect x="0" y="20" width="32" height="1" fill="#a49470" /><rect x="0" y="24" width="32" height="1" fill="#a49470" /><rect x="0" y="28" width="32" height="1" fill="#a49470" /><rect x="0" y="32" width="32" height="1" fill="#a49470" /><rect x="-7" y="0" width="1" height="4" fill="#a49470" /><rect x="0" y="0" width="1" height="4" fill="#a49470" /><rect x="7" y="0" width="1" height="4" fill="#a49470" /><rect x="14" y="0" width="1" height="4" fill="#a49470" /><rect x="21" y="0" width="1" height="4" fill="#a49470" /><rect x="28" y="0" width="1" height="4" fill="#a49470" /><rect x="35" y="0" width="1" height="4" fill="#a49470" /><rect x="-3.5" y="4" width="1" height="4" fill="#a49470" /><rect x="3.5" y="4" width="1" height="4" fill="#a49470" /><rect x="10.5" y="4" width="1" height="4" fill="#a49470" /><rect x="17.5" y="4" width="1" height="4" fill="#a49470" /><rect x="24.5" y="4" width="1" height="4" fill="#a49470" /><rect x="31.5" y="4" width="1" height="4" fill="#a49470" /><rect x="38.5" y="4" width="1" height="4" fill="#a49470" /><rect x="-7" y="8" width="1" height="4" fill="#a49470" /><rect x="0" y="8" width="1" height="4" fill="#a49470" /><rect x="7" y="8" width="1" height="4" fill="#a49470" /><rect x="14" y="8" width="1" height="4" fill="#a49470" /><rect x="21" y="8" width="1" height="4" fill="#a49470" /><rect x="28" y="8" width="1" height="4" fill="#a49470" /><rect x="35" y="8" width="1" height="4" fill="#a49470" /><rect x="-3.5" y="12" width="1" height="4" fill="#a49470" /><rect x="3.5" y="12" width="1" height="4" fill="#a49470" /><rect x="10.5" y="12" width="1" height="4" fill="#a49470" /><rect x="17.5" y="12" width="1" height="4" fill="#a49470" /><rect x="24.5" y="12" width="1" height="4" fill="#a49470" /><rect x="31.5" y="12" width="1" height="4" fill="#a49470" /><rect x="38.5" y="12" width="1" height="4" fill="#a49470" /><rect x="-7" y="16" width="1" height="4" fill="#a49470" /><rect x="0" y="16" width="1" height="4" fill="#a49470" /><rect x="7" y="16" width="1" height="4" fill="#a49470" /><rect x="14" y="16" width="1" height="4" fill="#a49470" /><rect x="21" y="16" width="1" height="4" fill="#a49470" /><rect x="28" y="16" width="1" height="4" fill="#a49470" /><rect x="35" y="16" width="1" height="4" fill="#a49470" /><rect x="-3.5" y="20" width="1" height="4" fill="#a49470" /><rect x="3.5" y="20" width="1" height="4" fill="#a49470" /><rect x="10.5" y="20" width="1" height="4" fill="#a49470" /><rect x="17.5" y="20" width="1" height="4" fill="#a49470" /><rect x="24.5" y="20" width="1" height="4" fill="#a49470" /><rect x="31.5" y="20" width="1" height="4" fill="#a49470" /><rect x="38.5" y="20" width="1" height="4" fill="#a49470" /><rect x="-7" y="24" width="1" height="4" fill="#a49470" /><rect x="0" y="24" width="1" height="4" fill="#a49470" /><rect x="7" y="24" width="1" height="4" fill="#a49470" /><rect x="14" y="24" width="1" height="4" fill="#a49470" /><rect x="21" y="24" width="1" height="4" fill="#a49470" /><rect x="28" y="24" width="1" height="4" fill="#a49470" /><rect x="35" y="24" width="1" height="4" fill="#a49470" /><rect x="-3.5" y="28" width="1" height="4" fill="#a49470" /><rect x="3.5" y="28" width="1" height="4" fill="#a49470" /><rect x="10.5" y="28" width="1" height="4" fill="#a49470" /><rect x="17.5" y="28" width="1" height="4" fill="#a49470" /><rect x="24.5" y="28" width="1" height="4" fill="#a49470" /><rect x="31.5" y="28" width="1" height="4" fill="#a49470" /><rect x="38.5" y="28" width="1" height="4" fill="#a49470" /><rect x="-7" y="32" width="1" height="4" fill="#a49470" /><rect x="0" y="32" width="1" height="4" fill="#a49470" /><rect x="7" y="32" width="1" height="4" fill="#a49470" /><rect x="14" y="32" width="1" height="4" fill="#a49470" /><rect x="21" y="32" width="1" height="4" fill="#a49470" /><rect x="28" y="32" width="1" height="4" fill="#a49470" /><rect x="35" y="32" width="1" height="4" fill="#a49470" /></g></svg></g><g transform="translate(44.5,165.0)"><svg width="32" height="32" overflow="hidden"><g filter="url(#nzs)"><rect x="0" y="0" width="32" height="32" fill="#bca35a" /><rect x="0" y="0" width="32" height="0.8" fill="#a08840" /><rect x="0" y="5" width="32" height="0.8" fill="#a08840" /><rect x="0" y="10" width="32" height="0.8" fill="#a08840" /><rect x="0" y="15" width="32" height="0.8" fill="#a08840" /><rect x="0" y="20" width="32" height="0.8" fill="#a08840" /><rect x="0" y="25" width="32" height="0.8" fill="#a08840" /><rect x="0" y="30" width="32" height="0.8" fill="#a08840" /></g></svg></g><g transform="translate(80.0,165.0)"><svg width="32" height="32" overflow="hidden"><g filter="url(#nz)"><rect x="0" y="0" width="32" height="32" fill="#72747e" /><rect x="0" y="0" width="32" height="1.4" fill="#d0d2d8" /><rect x="0" y="4" width="32" height="1.4" fill="#d0d2d8" /><rect x="0" y="8" width="32" height="1.4" fill="#d0d2d8" /><rect x="0" y="12" width="32" height="1.4" fill="#d0d2d8" /><rect x="0" y="16" width="32" height="1.4" fill="#d0d2d8" /><rect x="0" y="20" width="32" height="1.4" fill="#d0d2d8" /><rect x="0" y="24" width="32" height="1.4" fill="#d0d2d8" /><rect x="0" y="28" width="32" height="1.4" fill="#d0d2d8" /><rect x="0" y="32" width="32" height="1.4" fill="#d0d2d8" /><rect x="-8" y="0" width="1.4" height="4" fill="#d0d2d8" /><rect x="0" y="0" width="1.4" height="4" fill="#d0d2d8" /><rect x="8" y="0" width="1.4" height="4" fill="#d0d2d8" /><rect x="16" y="0" width="1.4" height="4" fill="#d0d2d8" /><rect x="24" y="0" width="1.4" height="4" fill="#d0d2d8" /><rect x="32" y="0" width="1.4" height="4" fill="#d0d2d8" /><rect x="40" y="0" width="1.4" height="4" fill="#d0d2d8" /><rect x="-4.0" y="4" width="1.4" height="4" fill="#d0d2d8" /><rect x="4.0" y="4" width="1.4" height="4" fill="#d0d2d8" /><rect x="12.0" y="4" width="1.4" height="4" fill="#d0d2d8" /><rect x="20.0" y="4" width="1.4" height="4" fill="#d0d2d8" /><rect x="28.0" y="4" width="1.4" height="4" fill="#d0d2d8" /><rect x="36.0" y="4" width="1.4" height="4" fill="#d0d2d8" /><rect x="44.0" y="4" width="1.4" height="4" fill="#d0d2d8" /><rect x="-8" y="8" width="1.4" height="4" fill="#d0d2d8" /><rect x="0" y="8" width="1.4" height="4" fill="#d0d2d8" /><rect x="8" y="8" width="1.4" height="4" fill="#d0d2d8" /><rect x="16" y="8" width="1.4" height="4" fill="#d0d2d8" /><rect x="24" y="8" width="1.4" height="4" fill="#d0d2d8" /><rect x="32" y="8" width="1.4" height="4" fill="#d0d2d8" /><rect x="40" y="8" width="1.4" height="4" fill="#d0d2d8" /><rect x="-4.0" y="12" width="1.4" height="4" fill="#d0d2d8" /><rect x="4.0" y="12" width="1.4" height="4" fill="#d0d2d8" /><rect x="12.0" y="12" width="1.4" height="4" fill="#d0d2d8" /><rect x="20.0" y="12" width="1.4" height="4" fill="#d0d2d8" /><rect x="28.0" y="12" width="1.4" height="4" fill="#d0d2d8" /><rect x="36.0" y="12" width="1.4" height="4" fill="#d0d2d8" /><rect x="44.0" y="12" width="1.4" height="4" fill="#d0d2d8" /><rect x="-8" y="16" width="1.4" height="4" fill="#d0d2d8" /><rect x="0" y="16" width="1.4" height="4" fill="#d0d2d8" /><rect x="8" y="16" width="1.4" height="4" fill="#d0d2d8" /><rect x="16" y="16" width="1.4" height="4" fill="#d0d2d8" /><rect x="24" y="16" width="1.4" height="4" fill="#d0d2d8" /><rect x="32" y="16" width="1.4" height="4" fill="#d0d2d8" /><rect x="40" y="16" width="1.4" height="4" fill="#d0d2d8" /><rect x="-4.0" y="20" width="1.4" height="4" fill="#d0d2d8" /><rect x="4.0" y="20" width="1.4" height="4" fill="#d0d2d8" /><rect x="12.0" y="20" width="1.4" height="4" fill="#d0d2d8" /><rect x="20.0" y="20" width="1.4" height="4" fill="#d0d2d8" /><rect x="28.0" y="20" width="1.4" height="4" fill="#d0d2d8" /><rect x="36.0" y="20" width="1.4" height="4" fill="#d0d2d8" /><rect x="44.0" y="20" width="1.4" height="4" fill="#d0d2d8" /><rect x="-8" y="24" width="1.4" height="4" fill="#d0d2d8" /><rect x="0" y="24" width="1.4" height="4" fill="#d0d2d8" /><rect x="8" y="24" width="1.4" height="4" fill="#d0d2d8" /><rect x="16" y="24" width="1.4" height="4" fill="#d0d2d8" /><rect x="24" y="24" width="1.4" height="4" fill="#d0d2d8" /><rect x="32" y="24" width="1.4" height="4" fill="#d0d2d8" /><rect x="40" y="24" width="1.4" height="4" fill="#d0d2d8" /><rect x="-4.0" y="28" width="1.4" height="4" fill="#d0d2d8" /><rect x="4.0" y="28" width="1.4" height="4" fill="#d0d2d8" /><rect x="12.0" y="28" width="1.4" height="4" fill="#d0d2d8" /><rect x="20.0" y="28" width="1.4" height="4" fill="#d0d2d8" /><rect x="28.0" y="28" width="1.4" height="4" fill="#d0d2d8" /><rect x="36.0" y="28" width="1.4" height="4" fill="#d0d2d8" /><rect x="44.0" y="28" width="1.4" height="4" fill="#d0d2d8" /><rect x="-8" y="32" width="1.4" height="4" fill="#d0d2d8" /><rect x="0" y="32" width="1.4" height="4" fill="#d0d2d8" /><rect x="8" y="32" width="1.4" height="4" fill="#d0d2d8" /><rect x="16" y="32" width="1.4" height="4" fill="#d0d2d8" /><rect x="24" y="32" width="1.4" height="4" fill="#d0d2d8" /><rect x="32" y="32" width="1.4" height="4" fill="#d0d2d8" /><rect x="40" y="32" width="1.4" height="4" fill="#d0d2d8" /></g></svg></g><g transform="translate(115.5,165.0)"><svg width="32" height="32" overflow="hidden"><g filter="url(#nzl)"><rect x="0" y="0" width="32" height="32" fill="#cdc7bd" /><rect x="0" y="0" width="32" height="0.6" fill="#b9b2a8" /><rect x="0" y="8" width="32" height="0.6" fill="#b9b2a8" /><rect x="0" y="16" width="32" height="0.6" fill="#b9b2a8" /><rect x="0" y="24" width="32" height="0.6" fill="#b9b2a8" /><rect x="0" y="32" width="32" height="0.6" fill="#b9b2a8" /><rect x="-16" y="0" width="0.6" height="8" fill="#b9b2a8" /><rect x="0" y="0" width="0.6" height="8" fill="#b9b2a8" /><rect x="16" y="0" width="0.6" height="8" fill="#b9b2a8" /><rect x="32" y="0" width="0.6" height="8" fill="#b9b2a8" /><rect x="48" y="0" width="0.6" height="8" fill="#b9b2a8" /><rect x="-8.0" y="8" width="0.6" height="8" fill="#b9b2a8" /><rect x="8.0" y="8" width="0.6" height="8" fill="#b9b2a8" /><rect x="24.0" y="8" width="0.6" height="8" fill="#b9b2a8" /><rect x="40.0" y="8" width="0.6" height="8" fill="#b9b2a8" /><rect x="56.0" y="8" width="0.6" height="8" fill="#b9b2a8" /><rect x="-16" y="16" width="0.6" height="8" fill="#b9b2a8" /><rect x="0" y="16" width="0.6" height="8" fill="#b9b2a8" /><rect x="16" y="16" width="0.6" height="8" fill="#b9b2a8" /><rect x="32" y="16" width="0.6" height="8" fill="#b9b2a8" /><rect x="48" y="16" width="0.6" height="8" fill="#b9b2a8" /><rect x="-8.0" y="24" width="0.6" height="8" fill="#b9b2a8" /><rect x="8.0" y="24" width="0.6" height="8" fill="#b9b2a8" /><rect x="24.0" y="24" width="0.6" height="8" fill="#b9b2a8" /><rect x="40.0" y="24" width="0.6" height="8" fill="#b9b2a8" /><rect x="56.0" y="24" width="0.6" height="8" fill="#b9b2a8" /><rect x="-16" y="32" width="0.6" height="8" fill="#b9b2a8" /><rect x="0" y="32" width="0.6" height="8" fill="#b9b2a8" /><rect x="16" y="32" width="0.6" height="8" fill="#b9b2a8" /><rect x="32" y="32" width="0.6" height="8" fill="#b9b2a8" /><rect x="48" y="32" width="0.6" height="8" fill="#b9b2a8" /></g></svg></g><g transform="translate(151.0,165.0)"><svg width="32" height="32" overflow="hidden"><g><rect x="0" y="0" width="32" height="32" fill="#b6865a" /><rect x="0" y="9.5" width="32" height="1.3" fill="#6a4628" /><rect x="0" y="20.5" width="32" height="1.3" fill="#6a4628" /><rect x="0" y="31" width="32" height="1.3" fill="#6a4628" /></g></svg></g><g transform="translate(9.0,200.5)"><svg width="32" height="32" overflow="hidden"><g><rect x="0" y="0" width="32" height="32" fill="#dcdcdc" /><rect x="0" y="5" width="32" height="0.9" fill="#bdbdbd" /><rect x="0" y="11" width="32" height="0.9" fill="#bdbdbd" /><rect x="0" y="17" width="32" height="0.9" fill="#bdbdbd" /><rect x="0" y="23" width="32" height="0.9" fill="#bdbdbd" /><rect x="0" y="29" width="32" height="0.9" fill="#bdbdbd" /><rect x="0" y="35" width="32" height="0.9" fill="#bdbdbd" /></g></svg></g><g transform="translate(44.5,200.5)"><svg width="32" height="32" overflow="hidden"><g filter="url(#nzl)"><rect x="0" y="0" width="32" height="32" fill="#d3d3d3" /></g></svg></g><g transform="translate(80.0,200.5)"><svg width="32" height="32" overflow="hidden"><g filter="url(#nz)"><rect x="0" y="0" width="32" height="32" fill="#6a665d" /><rect x="1" y="0" width="1.2" height="32" fill="#57534b" /><rect x="5" y="0" width="1.2" height="32" fill="#57534b" /><rect x="9" y="0" width="1.2" height="32" fill="#57534b" /><rect x="13" y="0" width="1.2" height="32" fill="#57534b" /><rect x="17" y="0" width="1.2" height="32" fill="#57534b" /><rect x="21" y="0" width="1.2" height="32" fill="#57534b" /><rect x="25" y="0" width="1.2" height="32" fill="#57534b" /><rect x="29" y="0" width="1.2" height="32" fill="#57534b" /><rect x="33" y="0" width="1.2" height="32" fill="#57534b" /><rect x="3" y="0" width="0.7" height="32" fill="#7c786e" /><rect x="10" y="0" width="0.7" height="32" fill="#7c786e" /><rect x="17" y="0" width="0.7" height="32" fill="#7c786e" /><rect x="24" y="0" width="0.7" height="32" fill="#7c786e" /><rect x="31" y="0" width="0.7" height="32" fill="#7c786e" /></g></svg></g><g transform="translate(115.5,200.5)"><svg width="32" height="32" overflow="hidden"><g filter="url(#nzl)"><rect x="0" y="0" width="32" height="32" fill="#a9a9aa" /><rect x="0" y="0" width="32" height="0.6" fill="#c4c4c4" /><rect x="0" y="6" width="32" height="0.6" fill="#c4c4c4" /><rect x="0" y="12" width="32" height="0.6" fill="#c4c4c4" /><rect x="0" y="18" width="32" height="0.6" fill="#c4c4c4" /><rect x="0" y="24" width="32" height="0.6" fill="#c4c4c4" /><rect x="0" y="30" width="32" height="0.6" fill="#c4c4c4" /><rect x="-12" y="0" width="0.6" height="6" fill="#c4c4c4" /><rect x="0" y="0" width="0.6" height="6" fill="#c4c4c4" /><rect x="12" y="0" width="0.6" height="6" fill="#c4c4c4" /><rect x="24" y="0" width="0.6" height="6" fill="#c4c4c4" /><rect x="36" y="0" width="0.6" height="6" fill="#c4c4c4" /><rect x="-6.0" y="6" width="0.6" height="6" fill="#c4c4c4" /><rect x="6.0" y="6" width="0.6" height="6" fill="#c4c4c4" /><rect x="18.0" y="6" width="0.6" height="6" fill="#c4c4c4" /><rect x="30.0" y="6" width="0.6" height="6" fill="#c4c4c4" /><rect x="42.0" y="6" width="0.6" height="6" fill="#c4c4c4" /><rect x="-12" y="12" width="0.6" height="6" fill="#c4c4c4" /><rect x="0" y="12" width="0.6" height="6" fill="#c4c4c4" /><rect x="12" y="12" width="0.6" height="6" fill="#c4c4c4" /><rect x="24" y="12" width="0.6" height="6" fill="#c4c4c4" /><rect x="36" y="12" width="0.6" height="6" fill="#c4c4c4" /><rect x="-6.0" y="18" width="0.6" height="6" fill="#c4c4c4" /><rect x="6.0" y="18" width="0.6" height="6" fill="#c4c4c4" /><rect x="18.0" y="18" width="0.6" height="6" fill="#c4c4c4" /><rect x="30.0" y="18" width="0.6" height="6" fill="#c4c4c4" /><rect x="42.0" y="18" width="0.6" height="6" fill="#c4c4c4" /><rect x="-12" y="24" width="0.6" height="6" fill="#c4c4c4" /><rect x="0" y="24" width="0.6" height="6" fill="#c4c4c4" /><rect x="12" y="24" width="0.6" height="6" fill="#c4c4c4" /><rect x="24" y="24" width="0.6" height="6" fill="#c4c4c4" /><rect x="36" y="24" width="0.6" height="6" fill="#c4c4c4" /><rect x="-6.0" y="30" width="0.6" height="6" fill="#c4c4c4" /><rect x="6.0" y="30" width="0.6" height="6" fill="#c4c4c4" /><rect x="18.0" y="30" width="0.6" height="6" fill="#c4c4c4" /><rect x="30.0" y="30" width="0.6" height="6" fill="#c4c4c4" /><rect x="42.0" y="30" width="0.6" height="6" fill="#c4c4c4" /></g></svg></g><g transform="translate(151.0,200.5)"><svg width="32" height="32" overflow="hidden"><g filter="url(#nzl)"><rect x="0" y="0" width="32" height="32" fill="#a8a8aa" /><rect x="0" y="0" width="32" height="10" fill="#6c3c46" /><rect x="16" y="0" width="1" height="10" fill="#4a2a30" /></g></svg></g><g transform="translate(9.0,236.0)"><svg width="32" height="32" overflow="hidden"><g><rect x="0" y="0" width="32" height="32" fill="#dc8e60" /><rect x="2" y="0" width="1.2" height="32" fill="#c8784a" /><rect x="7" y="0" width="1.2" height="32" fill="#c8784a" /><rect x="12" y="0" width="1.2" height="32" fill="#c8784a" /><rect x="17" y="0" width="1.2" height="32" fill="#c8784a" /><rect x="22" y="0" width="1.2" height="32" fill="#c8784a" /><rect x="27" y="0" width="1.2" height="32" fill="#c8784a" /><rect x="32" y="0" width="1.2" height="32" fill="#c8784a" /></g></svg></g><g transform="translate(44.5,236.0)"><svg width="32" height="32" overflow="hidden"><g filter="url(#nz)"><rect x="0" y="0" width="32" height="32" fill="#737372" /><rect x="15.5" y="0" width="1" height="32" fill="#9a9a98" /><rect x="0" y="15.5" width="32" height="1" fill="#9a9a98" /></g></svg></g><g transform="translate(80.0,236.0)"><svg width="32" height="32" overflow="hidden"><g><rect x="0" y="0" width="32" height="32" fill="#e3dbc5" /><rect x="2" y="0" width="0.8" height="32" fill="#cfc6ae" /><rect x="7" y="0" width="0.8" height="32" fill="#cfc6ae" /><rect x="12" y="0" width="0.8" height="32" fill="#cfc6ae" /><rect x="17" y="0" width="0.8" height="32" fill="#cfc6ae" /><rect x="22" y="0" width="0.8" height="32" fill="#cfc6ae" /><rect x="27" y="0" width="0.8" height="32" fill="#cfc6ae" /><rect x="32" y="0" width="0.8" height="32" fill="#cfc6ae" /></g></svg></g><g transform="translate(115.5,236.0)"><svg width="32" height="32" overflow="hidden"><g filter="url(#nzs)"><rect x="0" y="0" width="32" height="32" fill="#b6ae8c" /></g></svg></g><g transform="translate(151.0,236.0)"><svg width="32" height="32" overflow="hidden"><g filter="url(#nz)"><rect x="0" y="0" width="32" height="32" fill="#bf6e5e" /><rect x="0" y="0.0" width="32" height="0.9" fill="#d89484" /><rect x="0" y="3.5" width="32" height="0.9" fill="#d89484" /><rect x="0" y="7.0" width="32" height="0.9" fill="#d89484" /><rect x="0" y="10.5" width="32" height="0.9" fill="#d89484" /><rect x="0" y="14.0" width="32" height="0.9" fill="#d89484" /><rect x="0" y="17.5" width="32" height="0.9" fill="#d89484" /><rect x="0" y="21.0" width="32" height="0.9" fill="#d89484" /><rect x="0" y="24.5" width="32" height="0.9" fill="#d89484" /><rect x="0" y="28.0" width="32" height="0.9" fill="#d89484" /><rect x="0" y="31.5" width="32" height="0.9" fill="#d89484" /></g></svg></g><g transform="translate(9.0,271.5)"><svg width="32" height="32" overflow="hidden"><g filter="url(#nzl)"><rect x="0" y="0" width="32" height="32" fill="#b4b0a8" /><rect x="0" y="0" width="10" height="8" fill="#c2beb6" /><rect x="10" y="8" width="12" height="8" fill="#a8a49c" /><rect x="20" y="16" width="12" height="8" fill="#c0bcb4" /><rect x="0" y="24" width="14" height="8" fill="#aaa69e" /></g></svg></g><g transform="translate(44.5,271.5)"><svg width="32" height="32" overflow="hidden"><g filter="url(#nz)"><rect x="0" y="0" width="32" height="32" fill="#dbbb7e" /><rect x="0" y="0" width="32" height="0.8" fill="#b8985e" /><rect x="0" y="5" width="32" height="0.8" fill="#b8985e" /><rect x="0" y="10" width="32" height="0.8" fill="#b8985e" /><rect x="0" y="15" width="32" height="0.8" fill="#b8985e" /><rect x="0" y="20" width="32" height="0.8" fill="#b8985e" /><rect x="0" y="25" width="32" height="0.8" fill="#b8985e" /><rect x="0" y="30" width="32" height="0.8" fill="#b8985e" /><rect x="-10" y="0" width="0.8" height="5" fill="#b8985e" /><rect x="0" y="0" width="0.8" height="5" fill="#b8985e" /><rect x="10" y="0" width="0.8" height="5" fill="#b8985e" /><rect x="20" y="0" width="0.8" height="5" fill="#b8985e" /><rect x="30" y="0" width="0.8" height="5" fill="#b8985e" /><rect x="40" y="0" width="0.8" height="5" fill="#b8985e" /><rect x="-5.0" y="5" width="0.8" height="5" fill="#b8985e" /><rect x="5.0" y="5" width="0.8" height="5" fill="#b8985e" /><rect x="15.0" y="5" width="0.8" height="5" fill="#b8985e" /><rect x="25.0" y="5" width="0.8" height="5" fill="#b8985e" /><rect x="35.0" y="5" width="0.8" height="5" fill="#b8985e" /><rect x="45.0" y="5" width="0.8" height="5" fill="#b8985e" /><rect x="-10" y="10" width="0.8" height="5" fill="#b8985e" /><rect x="0" y="10" width="0.8" height="5" fill="#b8985e" /><rect x="10" y="10" width="0.8" height="5" fill="#b8985e" /><rect x="20" y="10" width="0.8" height="5" fill="#b8985e" /><rect x="30" y="10" width="0.8" height="5" fill="#b8985e" /><rect x="40" y="10" width="0.8" height="5" fill="#b8985e" /><rect x="-5.0" y="15" width="0.8" height="5" fill="#b8985e" /><rect x="5.0" y="15" width="0.8" height="5" fill="#b8985e" /><rect x="15.0" y="15" width="0.8" height="5" fill="#b8985e" /><rect x="25.0" y="15" width="0.8" height="5" fill="#b8985e" /><rect x="35.0" y="15" width="0.8" height="5" fill="#b8985e" /><rect x="45.0" y="15" width="0.8" height="5" fill="#b8985e" /><rect x="-10" y="20" width="0.8" height="5" fill="#b8985e" /><rect x="0" y="20" width="0.8" height="5" fill="#b8985e" /><rect x="10" y="20" width="0.8" height="5" fill="#b8985e" /><rect x="20" y="20" width="0.8" height="5" fill="#b8985e" /><rect x="30" y="20" width="0.8" height="5" fill="#b8985e" /><rect x="40" y="20" width="0.8" height="5" fill="#b8985e" /><rect x="-5.0" y="25" width="0.8" height="5" fill="#b8985e" /><rect x="5.0" y="25" width="0.8" height="5" fill="#b8985e" /><rect x="15.0" y="25" width="0.8" height="5" fill="#b8985e" /><rect x="25.0" y="25" width="0.8" height="5" fill="#b8985e" /><rect x="35.0" y="25" width="0.8" height="5" fill="#b8985e" /><rect x="45.0" y="25" width="0.8" height="5" fill="#b8985e" /><rect x="-10" y="30" width="0.8" height="5" fill="#b8985e" /><rect x="0" y="30" width="0.8" height="5" fill="#b8985e" /><rect x="10" y="30" width="0.8" height="5" fill="#b8985e" /><rect x="20" y="30" width="0.8" height="5" fill="#b8985e" /><rect x="30" y="30" width="0.8" height="5" fill="#b8985e" /><rect x="40" y="30" width="0.8" height="5" fill="#b8985e" /></g></svg></g></svg>
<div class="hdr" style="top:329px"><i></i><span>Components</span></div><div class="cls" style="top:331px"></div>
<div class="hdr" style="top:342px"><i></i><span>Styles</span></div><div class="cls" style="top:344px"></div>
<div class="hdr" style="top:355px"><i></i><span>Tags</span></div><div class="cls" style="top:357px"></div>
<div class="hdr" style="top:368px"><i></i><span>Shadows</span></div><div class="cls" style="top:370px"></div>
<div class="hdr" style="top:381px"><i></i><span>Scenes</span></div><div class="cls" style="top:383px"></div>
<div class="hdr" style="top:394px"><i class="d"></i><span>Instructor</span></div><div class="cls" style="top:396px"></div>

<div class="a" style="left:4px;top:407px;width:179px;height:252px;background:#fff"></div>
<div class="a" style="left:18px;top:412px;width:162px;height:122px;background:#fff8f7"></div>
<svg class="a" style="left:22px;top:482px" width="50" height="50" viewBox="701 520 50 50"><rect x="704" y="544.5" width="23.5" height="22.5" rx="1" fill="#b4c8da" stroke="#333" stroke-width="1"/><rect x="726.5" y="523" width="11.5" height="21.5" fill="none" stroke="#44448a" stroke-width="1"/><path d="M731.5 541.5 L742 530.5" stroke="#a51c1c" stroke-width="3" stroke-linecap="round"/><rect x="741.5" y="537.5" width="5" height="6" fill="#555"/><rect x="742.5" y="538.5" width="3" height="4" fill="#999"/><circle cx="726.5" cy="544.5" r="3" fill="#3a9a3a" stroke="#1f5f1f" stroke-width="0.8"/><circle cx="726.5" cy="544.5" r="1" fill="#fff"/></svg>
<div class="t" style="left:21.2px;top:541.2px;font-size:13px;font-weight:bold;color:#111">Rectangle Tool</div>
<div class="t" style="left:23.7px;top:554.1px;font-size:8.65px;color:#555">Draw rectangular Face entities.</div>
<div class="t" style="left:22.2px;top:573.8px;font-size:9.4px;font-weight:bold;color:#444">Tool Operation</div>
<div class="t" style="left:25.3px;top:585.5px;font-size:8.55px;color:#555">1. Click to set first corner.</div>
<div class="t" style="left:25.3px;top:596.1px;font-size:8.55px;color:#555">2. Move cursor diagonally.</div>
<div class="t" style="left:25.3px;top:606.7px;font-size:8.55px;color:#555">3. Click to set second corner.</div>
<div class="t" style="left:25.3px;top:617.6px;font-size:8.55px;color:#555">4. Esc = Cancel Operation.</div>
<div class="t" style="left:21.6px;top:636.2px;font-size:9.45px;font-weight:bold;color:#444">Modifier Keys</div>
<div class="t" style="left:23.7px;top:647.6px;font-size:8.73px;color:#555">Ctrl = Toggles drawing about center</div>
<div class="a" style="left:4px;top:657px;width:179px;height:2px;background:#fff"></div>
<svg class="a" style="left:185px;top:651px" width="8" height="5"><path d="M0.5 0.5 L4 4 L7.5 0.5" stroke="#333" stroke-width="1.1" fill="none"/></svg>
</div>
<div class="a" id="status">
<div class="a" style="left:0;top:0;width:874px;height:3px;background:#fafafa"></div>
<svg class="a" style="left:5px;top:4px" width="11" height="11"><circle cx="5.5" cy="5.5" r="4.5" fill="none" stroke="#aaa" stroke-width="1"/><path d="M5.5 3 V8" stroke="#aaa" stroke-width="1.6"/></svg>
<svg class="a" style="left:24px;top:3.5px" width="12" height="12"><circle cx="6" cy="6" r="5" fill="#fff" stroke="#222" stroke-width="1.1"/><circle cx="6" cy="3.8" r="1" fill="#222"/><path d="M6 5.5 V9.5" stroke="#222" stroke-width="1.6"/></svg>
<div class="a" style="left:44px;top:6px;width:1px;height:7px;background:#999"></div>
<div class="t" style="left:51px;top:6.3px;font-size:8.9px;color:#111;-webkit-text-stroke:0.15px #111">Select first corner. Ctrl = Select center.</div>
<div class="a" style="left:662.5px;top:7px;width:1px;height:7px;background:#999"></div>
<div class="t" style="left:669.5px;top:6.8px;font-size:8.7px;color:#111;-webkit-text-stroke:0.15px #111">Dimensions</div>
<div class="a" style="left:721px;top:2px;width:137px;height:17px;background:#fff;border:1px solid #cfcfcf"></div>
<svg class="a" style="left:863px;top:8px" width="10" height="10"><g fill="#c8c8c8"><rect x="7" y="1" width="1.5" height="1.5"/><rect x="4" y="4" width="1.5" height="1.5"/><rect x="7" y="4" width="1.5" height="1.5"/><rect x="1" y="7" width="1.5" height="1.5"/><rect x="4" y="7" width="1.5" height="1.5"/><rect x="7" y="7" width="1.5" height="1.5"/></g></svg>
<div class="t" style="left:724px;top:6.8px;font-size:8.7px;color:#111;-webkit-text-stroke:0.1px #111">0.48 m, 0.70 m</div>
</div>
</body></html>
